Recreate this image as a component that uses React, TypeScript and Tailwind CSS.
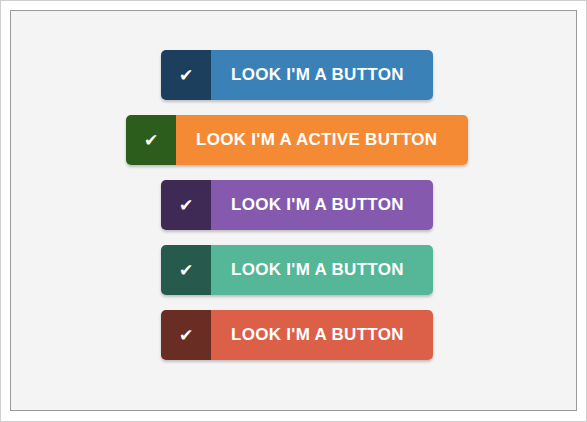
import React from "react";

type Btn = { label: string; light: string; dark: string; width: string };

const buttons: Btn[] = [
  { label: "LOOK I'M A BUTTON", light: "bg-[#3a81b7]", dark: "bg-[#1d3f5e]", width: "w-[272px]" },
  { label: "LOOK I'M A ACTIVE BUTTON", light: "bg-[#f48b34]", dark: "bg-[#2c5d1c]", width: "w-[342px]" },
  { label: "LOOK I'M A BUTTON", light: "bg-[#8459ae]", dark: "bg-[#3f2a56]", width: "w-[272px]" },
  { label: "LOOK I'M A BUTTON", light: "bg-[#55b797]", dark: "bg-[#265a4d]", width: "w-[272px]" },
  { label: "LOOK I'M A BUTTON", light: "bg-[#dc5f47]", dark: "bg-[#6a2d24]", width: "w-[272px]" },
];

export default function App() {
  return (
    <div className="w-[587px] h-[422px] border border-[#cfcfcf] bg-white pt-[9px] pl-[9px]">
      <div
        className="w-[567px] h-[401px] border border-[#9a9a9a] bg-[#f4f4f4] flex flex-col items-center pt-[39px] pl-[7px] gap-[15px]"
        style={{ fontFamily: '"Liberation Sans", Arial, sans-serif' }}
      >
        {buttons.map((b, i) => (
          <div
            key={i}
            className={`${b.width} h-[50px] flex rounded-[5px] overflow-hidden shadow-[0_2px_3px_rgba(0,0,0,0.22)] shrink-0`}
          >
            <div className={`${b.dark} w-[50px] h-full flex items-center justify-center text-white`}>
              <span className="text-[17px] leading-none font-bold" style={{ fontFamily: '"DejaVu Sans", sans-serif' }}>
                ✔
              </span>
            </div>
            <div className={`${b.light} flex-1 h-full flex items-center pl-[20px] text-white font-bold text-[17px] tracking-[0.3px]`}>
              {b.label}
            </div>
          </div>
        ))}
      </div>
    </div>
  );
}
